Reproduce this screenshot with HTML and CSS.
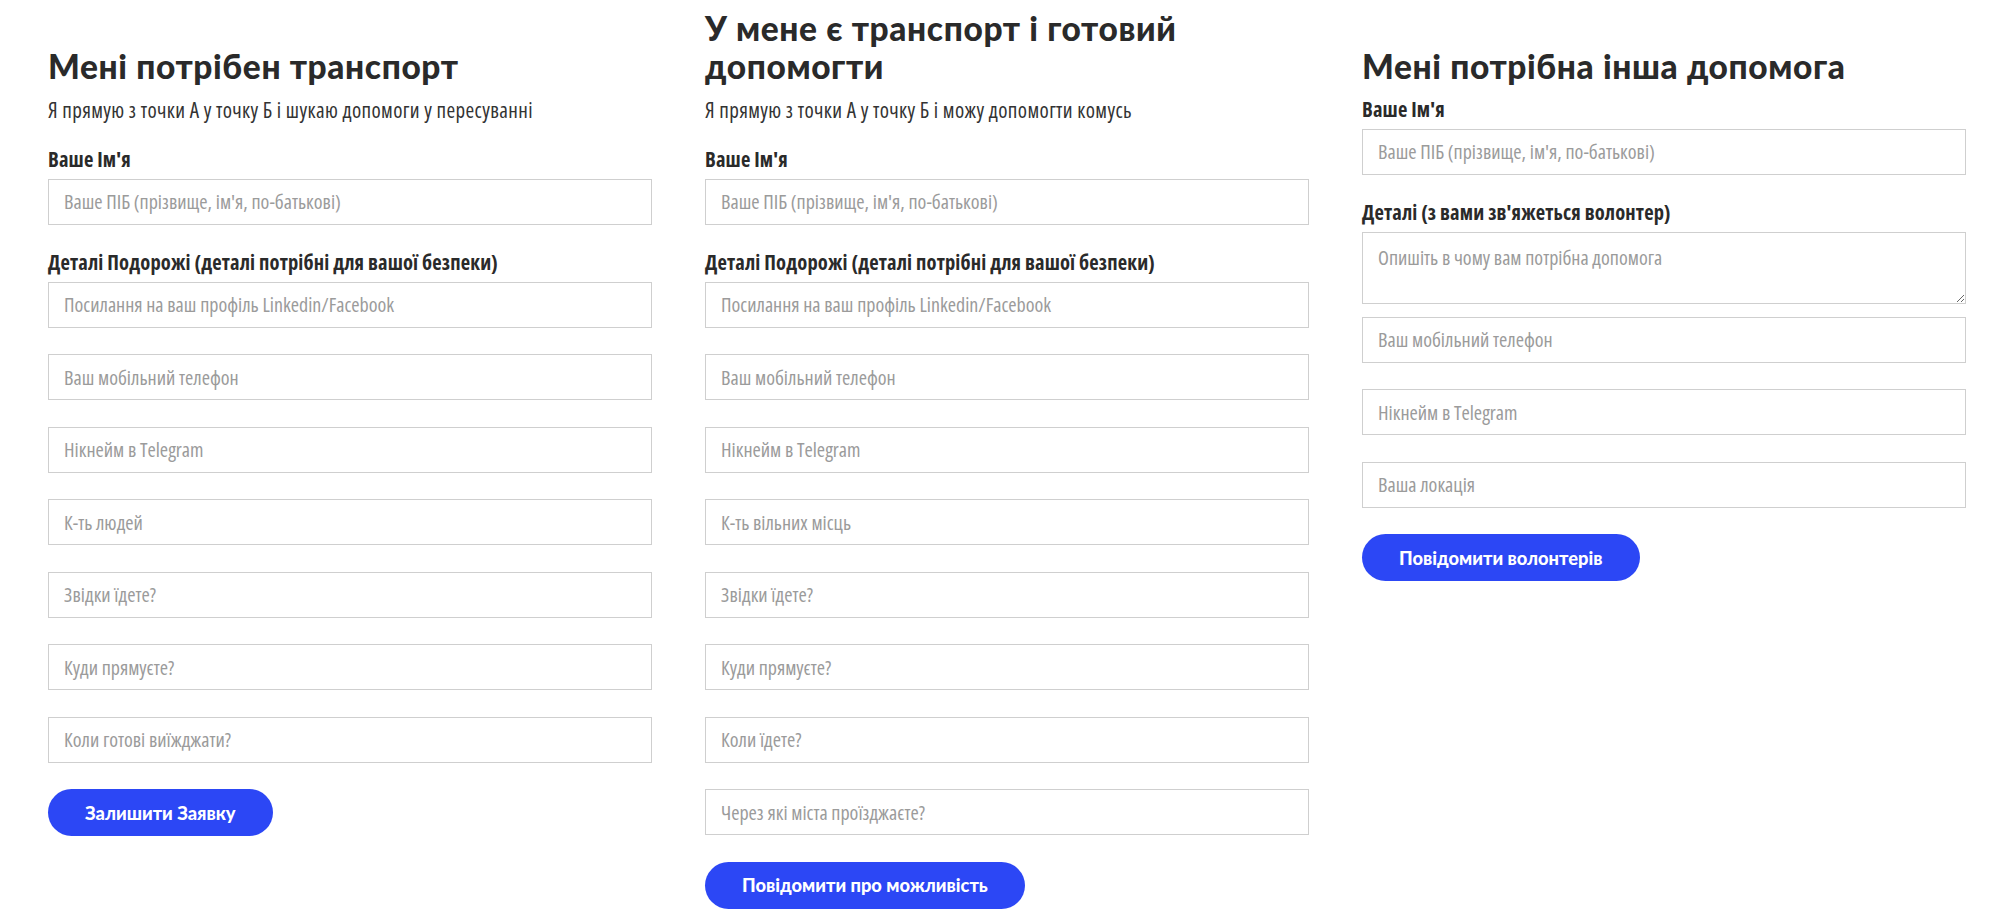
FILE: index.html
```html
<!DOCTYPE html>
<html lang="uk">
<head>
<meta charset="utf-8">
<title>Допомога з транспортом</title>
<link rel="stylesheet" href="styles.css">
</head>
<body>
<main class="page">
  <section class="col">
    <div class="title-wrap"><h2 class="title">Мені потрібен транспорт</h2></div>
    <p class="subtitle">Я прямую з точки А у точку Б і шукаю допомоги у пересуванні</p>
    <label class="label">Ваше Ім'я</label>
    <input class="field" type="text" placeholder="Ваше ПІБ (прізвище, ім'я, по-батькові)">
    <label class="label">Деталі Подорожі (деталі потрібні для вашої безпеки)</label>
    <input class="field" type="text" placeholder="Посилання на ваш профіль Linkedin/Facebook">
    <input class="field" type="text" placeholder="Ваш мобільний телефон">
    <input class="field" type="text" placeholder="Нікнейм в Telegram">
    <input class="field" type="text" placeholder="К-ть людей">
    <input class="field" type="text" placeholder="Звідки їдете?">
    <input class="field" type="text" placeholder="Куди прямуєте?">
    <input class="field" type="text" placeholder="Коли готові виїжджати?">
    <button class="btn" type="button">Залишити Заявку</button>
  </section>
  <section class="col">
    <div class="title-wrap"><h2 class="title">У мене є транспорт і готовий допомогти</h2></div>
    <p class="subtitle">Я прямую з точки А у точку Б і можу допомогти комусь</p>
    <label class="label">Ваше Ім'я</label>
    <input class="field" type="text" placeholder="Ваше ПІБ (прізвище, ім'я, по-батькові)">
    <label class="label">Деталі Подорожі (деталі потрібні для вашої безпеки)</label>
    <input class="field" type="text" placeholder="Посилання на ваш профіль Linkedin/Facebook">
    <input class="field" type="text" placeholder="Ваш мобільний телефон">
    <input class="field" type="text" placeholder="Нікнейм в Telegram">
    <input class="field" type="text" placeholder="К-ть вільних місць">
    <input class="field" type="text" placeholder="Звідки їдете?">
    <input class="field" type="text" placeholder="Куди прямуєте?">
    <input class="field" type="text" placeholder="Коли їдете?">
    <input class="field" type="text" placeholder="Через які міста проїзджаєте?">
    <button class="btn" type="button">Повідомити про можливість</button>
  </section>
  <section class="col">
    <div class="title-wrap"><h2 class="title">Мені потрібна інша допомога</h2></div>
    <label class="label">Ваше Ім'я</label>
    <input class="field" type="text" placeholder="Ваше ПІБ (прізвище, ім'я, по-батькові)">
    <label class="label">Деталі (з вами зв'яжеться волонтер)</label>
    <textarea class="field area" placeholder="Опишіть в чому вам потрібна допомога"></textarea>
    <input class="field" type="text" placeholder="Ваш мобільний телефон">
    <input class="field" type="text" placeholder="Нікнейм в Telegram">
    <input class="field" type="text" placeholder="Ваша локація">
    <button class="btn" type="button">Повідомити волонтерів</button>
  </section>
</main>
</body>
</html>
```
FILE: styles.css
```css
* { box-sizing: border-box; }

html, body {
  margin: 0;
  background: #ffffff;
}

body {
  font-family: "Open Sans", "Liberation Sans", Arial, sans-serif;
  font-stretch: 75%;
  color: #2b2b2b;
}

.page {
  display: grid;
  grid-template-columns: repeat(3, 604px);
  column-gap: 53px;
  align-items: start;
  padding: 9px 0 0 48px;
}

.col {
  display: flex;
  flex-direction: column;
  align-items: stretch;
}

.title-wrap {
  min-height: 76px;
  display: flex;
  align-items: flex-end;
  margin-bottom: 13px;
}

.title {
  margin: 0;
  font-family: Lato, Roboto, "Liberation Sans", sans-serif;
  font-stretch: 100%;
  font-weight: 900;
  font-size: 33.5px;
  letter-spacing: 0.6px;
  line-height: 38px;
  color: #2a2a2a;
}

.subtitle {
  margin: 0 0 26px;
  font-size: 21px;
  letter-spacing: 0.38px;
  line-height: 24px;
  color: #333333;
}

.label {
  display: block;
  font-weight: 700;
  font-size: 20.5px;
  letter-spacing: 0.15px;
  line-height: 22px;
  color: #2a2a2a;
  margin: 0 0 8.5px;
}

.field {
  display: block;
  width: 100%;
  height: 46px;
  margin: 0 0 26.5px;
  padding: 0 15px;
  border: 1px solid #cfcfcf;
  border-radius: 0;
  background: #ffffff;
  font-family: "Open Sans", "Liberation Sans", Arial, sans-serif;
  font-stretch: 75%;
  font-size: 20px;
  color: #333333;
  outline: none;
}

.field::placeholder {
  color: #9b9b9b;
  opacity: 1;
}

.area {
  height: 72px;
  margin-bottom: 13px;
  padding: 14px 15px;
  line-height: 22px;
  resize: vertical;
}

.btn {
  align-self: flex-start;
  height: 47px;
  padding: 0 37px;
  border: none;
  border-radius: 24px;
  background: #2c47f5;
  color: #ffffff;
  font-family: Lato, Roboto, "Liberation Sans", sans-serif;
  font-stretch: 100%;
  font-weight: 900;
  font-size: 18.3px;
  cursor: pointer;
}
```
